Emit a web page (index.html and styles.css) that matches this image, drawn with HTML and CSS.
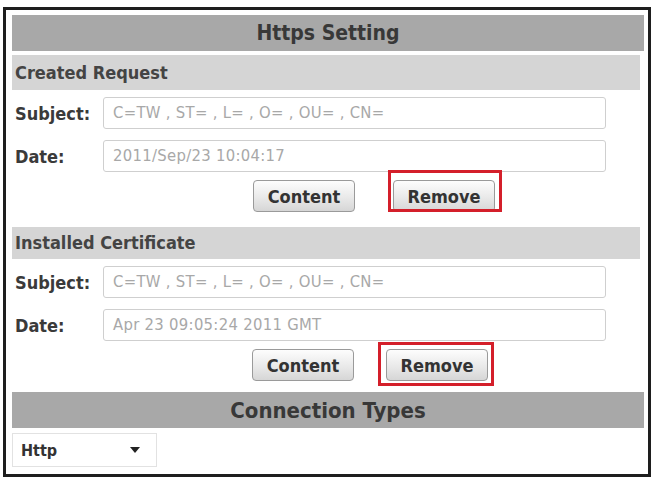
FILE: index.html
```html
<!DOCTYPE html>
<html>
<head>
<meta charset="utf-8">
<link rel="stylesheet" href="styles.css">
</head>
<body>
<div class="frame">
  <div class="bar">Https Setting</div>

  <div class="subbar">Created Request</div>
  <div class="row">
    <span class="label">Subject:</span>
    <div class="field">C=TW , ST= , L= , O= , OU= , CN=</div>
  </div>
  <div class="row">
    <span class="label">Date:</span>
    <div class="field">2011/Sep/23 10:04:17</div>
  </div>
  <div class="actions a1">
    <button class="btn">Content</button>
    <span class="mark m1"><button class="btn">Remove</button></span>
  </div>

  <div class="subbar sb2">Installed Certificate</div>
  <div class="row">
    <span class="label">Subject:</span>
    <div class="field">C=TW , ST= , L= , O= , OU= , CN=</div>
  </div>
  <div class="row">
    <span class="label">Date:</span>
    <div class="field">Apr 23 09:05:24 2011 GMT</div>
  </div>
  <div class="actions a2">
    <button class="btn">Content</button>
    <span class="mark m2"><button class="btn">Remove</button></span>
  </div>

  <div class="bar bar2">Connection Types</div>
  <div class="select">
    <span>Http</span>
    <span class="caret"></span>
  </div>
</div>
</body>
</html>
```

FILE: styles.css
```css
html, body {
  margin: 0;
  padding: 0;
  background: #ffffff;
}
body {
  font-family: "DejaVu Sans Condensed", "Liberation Sans", Arial, sans-serif;
  color: #3a3a3a;
}
.frame {
  margin: 7px 2px 0 3px;
  height: 470px;
  box-sizing: border-box;
  border: 3px solid #1e1e1e;
  padding: 5px 4px 0 6px;
  display: flex;
  flex-direction: column;
}
.bar {
  background: #a8a8a8;
  height: 36px;
  line-height: 37px;
  text-align: center;
  font-weight: bold;
  font-size: 21px;
  color: #383838;
}
.bar2 {
  margin-top: 11px;
  font-size: 22px;
}
.subbar {
  background: #d5d5d5;
  height: 35px;
  line-height: 36px;
  margin-top: 4px;
  margin-right: 4px;
  padding-left: 3px;
  font-weight: bold;
  font-size: 18px;
  color: #444;
}
.sb2 {
  margin-top: 15px;
  height: 32px;
  line-height: 32px;
}
.row {
  display: flex;
  align-items: center;
  margin-top: 7px;
}
.row + .row {
  margin-top: 11px;
}
.label {
  width: 88px;
  padding-left: 3px;
  font-size: 18px;
  font-weight: bold;
  color: #3a3a3a;
}
.field {
  width: 492px;
  height: 30px;
  border: 1px solid #cfcfcf;
  border-radius: 3px;
  box-sizing: content-box;
  line-height: 30px;
  padding-left: 9px;
  font-size: 16.5px;
  letter-spacing: 0.3px;
  color: #a8a8a8;
}
.actions {
  display: flex;
  margin-top: 8px;
  height: 32px;
}
.a1 { padding-left: 241px; gap: 38px; }
.a2 { padding-left: 240px; gap: 32px; }
.btn {
  width: 102px;
  height: 32px;
  border: 1px solid #9a9a9a;
  border-radius: 4px;
  background: linear-gradient(#fdfdfd, #e9e9e9 55%, #d6d6d6);
  font-family: "DejaVu Sans Condensed", "Liberation Sans", Arial, sans-serif;
  font-weight: bold;
  font-size: 18px;
  color: #333;
  padding: 0;
}
.mark {
  position: relative;
  display: block;
}
.mark::after {
  content: "";
  position: absolute;
  border: 3px solid #d41f2a;
  pointer-events: none;
}
.m1::after { left: -5px; right: -7px; top: -10px; bottom: 0; }
.m2::after { left: -8px; right: -6px; top: -7px; bottom: -5px; }
.select {
  margin-top: 5px;
  width: 145px;
  height: 34px;
  border: 1px solid #e2e2e2;
  display: flex;
  align-items: center;
  justify-content: space-between;
  padding: 0 16px 0 8px;
  box-sizing: border-box;
  font-weight: bold;
  font-size: 16px;
  color: #333;
}
.caret {
  width: 0;
  height: 0;
  border-left: 5px solid transparent;
  border-right: 5px solid transparent;
  border-top: 6px solid #222;
}
```
